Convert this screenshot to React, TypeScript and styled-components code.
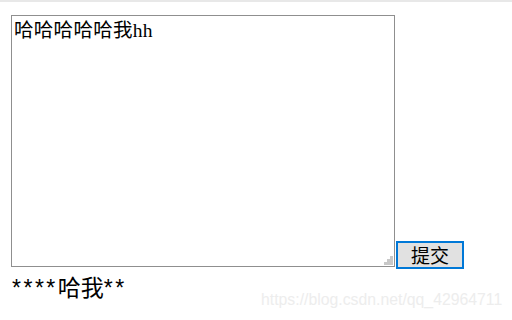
import React from "react";
import styled, { createGlobalStyle } from "styled-components";

const Global = createGlobalStyle`
  html, body { margin: 0; padding: 0; background: #fff; }
  body { font-family: "Liberation Sans", "Noto Sans CJK SC", sans-serif; }
`;

const Page = styled.div`
  position: relative;
  width: 512px;
  height: 320px;
  overflow: hidden;
  border-top: 2px solid #e8e8e8;
  box-sizing: border-box;
  padding: 13px 0 0 11px;
`;

const Form = styled.form`
  display: flex;
  align-items: flex-end;
  gap: 1px;
  margin: 0;
`;

const AreaWrap = styled.div`
  position: relative;
  width: 384px;
  height: 252px;
`;

const Area = styled.textarea`
  display: block;
  width: 100%;
  height: 100%;
  box-sizing: border-box;
  margin: 0;
  border: 1px solid #8f8f8f;
  padding: 3px 2px;
  resize: none;
  outline: none;
  font-family: "Liberation Serif", "Noto Sans CJK SC", serif;
  font-size: 19.5px;
  letter-spacing: 0.3px;
  line-height: 24px;
  color: #000;
  background: #fff;
`;

const Grip = styled.svg`
  position: absolute;
  right: 2px;
  bottom: 2px;
`;

const Submit = styled.button`
  width: 68px;
  height: 28px;
  margin: 0 0 -2px 0;
  box-sizing: border-box;
  border: 2px solid #0078d7;
  background: #e1e1e1;
  padding: 0;
  font-family: "Noto Sans CJK SC", sans-serif;
  font-size: 19px;
  line-height: 24px;
  color: #000;
`;

const Result = styled.div`
  margin-top: 8px;
  margin-left: 1px;
  font-family: "Liberation Sans", "Noto Sans CJK SC", sans-serif;
  font-size: 23px;
  line-height: 26px;
  color: #000;
`;

const Stars = styled.span`
  letter-spacing: 2.5px;
`;

const Watermark = styled.div`
  position: absolute;
  left: 261px;
  top: 289px;
  font-family: "Liberation Sans", sans-serif;
  font-size: 15.8px;
  color: #ededed;
`;

export default function App() {
  return (
    <>
      <Global />
      <Page>
        <Form onSubmit={(e) => e.preventDefault()}>
          <AreaWrap>
            <Area defaultValue="哈哈哈哈哈我hh" />
            <Grip width="10" height="10" viewBox="0 0 10 10">
              <rect x="7" y="1" width="3" height="3" fill="#c8c8c8" />
              <rect x="4" y="4" width="3" height="3" fill="#c8c8c8" />
              <rect x="7" y="4" width="3" height="3" fill="#c8c8c8" />
              <rect x="1" y="7" width="3" height="3" fill="#c8c8c8" />
              <rect x="4" y="7" width="3" height="3" fill="#c8c8c8" />
              <rect x="7" y="7" width="3" height="3" fill="#c8c8c8" />
            </Grip>
          </AreaWrap>
          <Submit type="submit">提交</Submit>
        </Form>
        <Result>
          <Stars>****</Stars>哈我<Stars>**</Stars>
        </Result>
        <Watermark>https://blog.csdn.net/qq_42964711</Watermark>
      </Page>
    </>
  );
}
